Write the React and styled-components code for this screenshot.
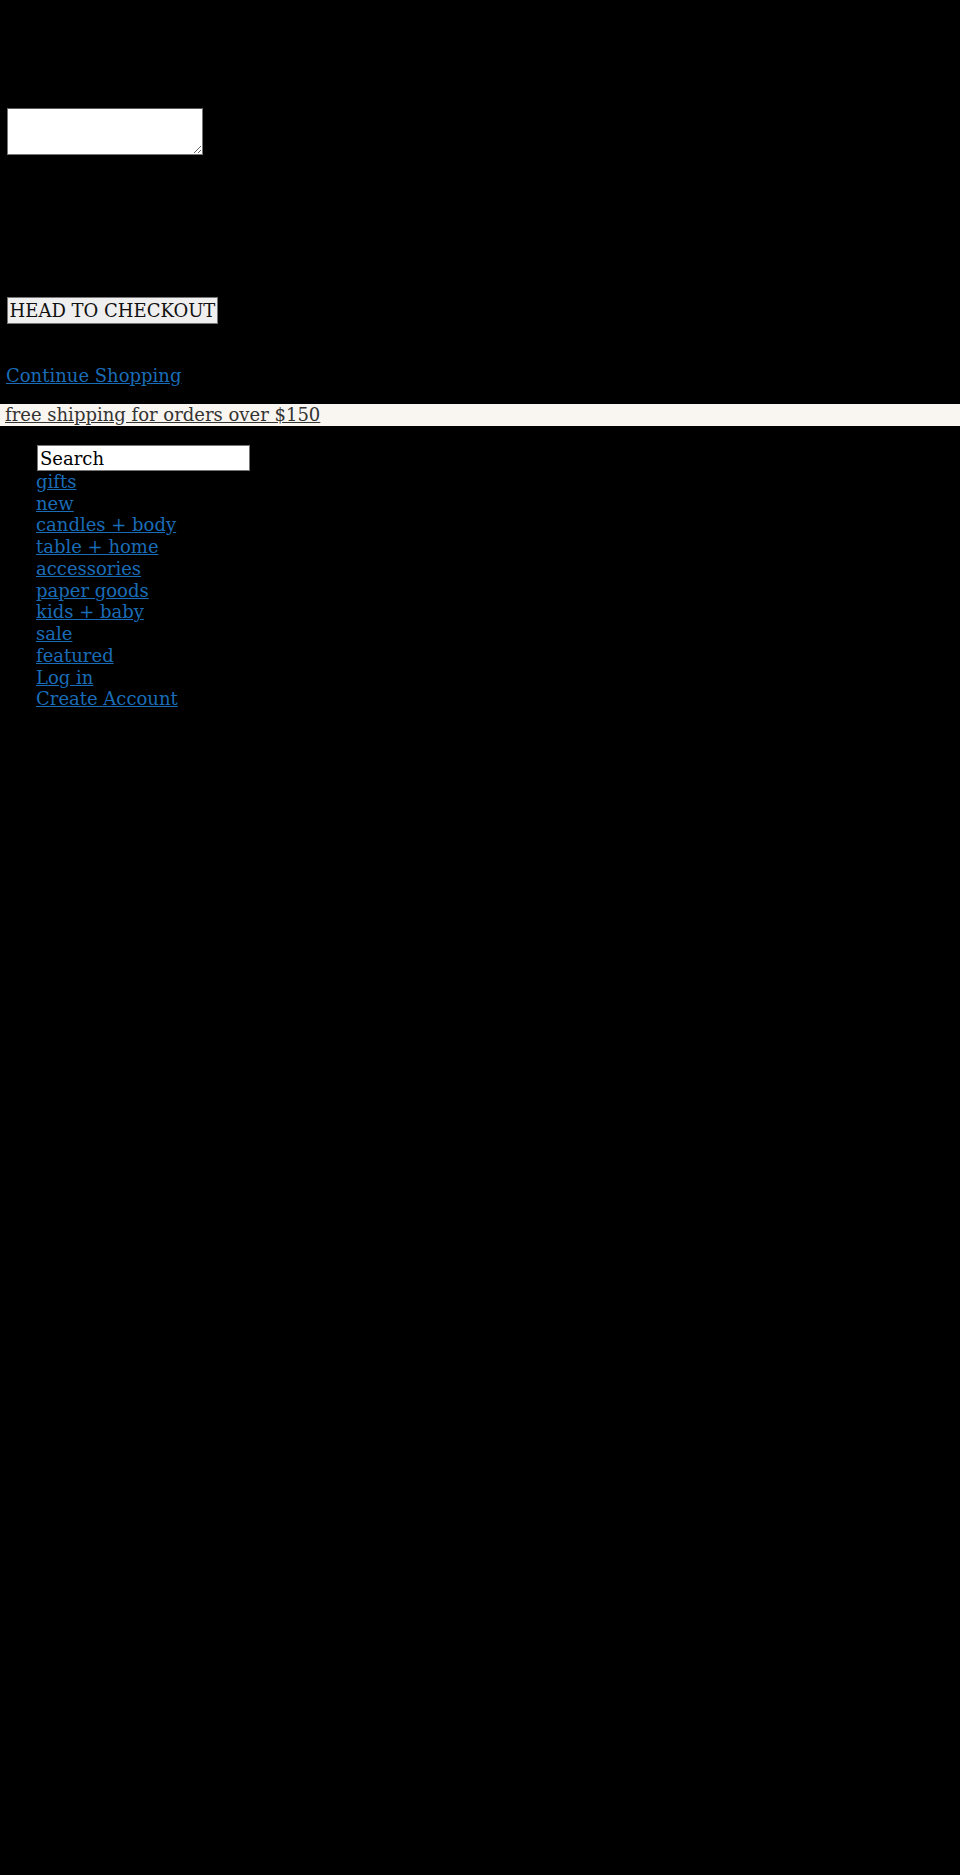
import React from "react";
import styled, { createGlobalStyle } from "styled-components";

const GlobalStyle = createGlobalStyle`
    body {
        margin: 0;
        background: #000;
        font-family: "DejaVu Serif", serif;
        font-size: 18px;
    }
`;

const Page = styled.div`
    min-height: 1875px;
    padding-top: 108px;
    box-sizing: border-box;
`;

const CartForm = styled.form`
    display: flex;
    flex-direction: column;
    align-items: flex-start;
    margin: 0;
`;

const CartNote = styled.textarea`
    width: 196px;
    height: 47px;
    box-sizing: border-box;
    margin-left: 7px;
    border: 1px solid #767676;
    border-top-color: #5a5a5a;
    background: #fff;
`;

const CheckoutButton = styled.button`
    margin: 142px 0 0 7px;
    height: 27px;
    width: 211px;
    padding: 0;
    box-sizing: border-box;
    font-family: "DejaVu Serif", serif;
    font-size: 18px;
    text-align: center;
    color: #111;
    background: #efefef;
    border: 1px solid #767676;
    white-space: nowrap;
`;

const Link = styled.a`
    color: #1a6cb7;
    text-decoration: underline;
    font-size: 18px;
    line-height: 21.75px;
`;

const ContinueLink = styled(Link)`
    display: block;
    margin: 41px 0 0 6px;
`;

const ShippingBar = styled.div`
    margin-top: 17px;
    height: 22px;
    line-height: 22px;
    padding-left: 5px;
    background: #f9f6f1;
`;

const ShippingLink = styled(Link)`
    color: #333;
    line-height: 22px;
`;

const Nav = styled.ul`
    list-style: none;
    margin: 19px 0 0;
    padding-left: 36px;
`;

const NavItem = styled.li`
    line-height: 21.75px;
`;

const SearchInput = styled.input`
    display: block;
    width: 213px;
    height: 26px;
    box-sizing: border-box;
    margin-left: 1px;
    padding: 1px 2px 0;
    font-family: "DejaVu Serif", serif;
    font-size: 18px;
    border: 1px solid #767676;
    background: #fff;
    &::placeholder {
        color: #000;
    }
`;

const navLinks = [
    "gifts",
    "new",
    "candles + body",
    "table + home",
    "accessories",
    "paper goods",
    "kids + baby",
    "sale",
    "featured",
    "Log in",
    "Create Account",
];

function App() {
    return (
        <Page>
            <GlobalStyle />
            <CartForm onSubmit={(e) => e.preventDefault()}>
                <CartNote />
                <CheckoutButton type="submit">HEAD TO CHECKOUT</CheckoutButton>
            </CartForm>
            <ContinueLink href="#">Continue Shopping</ContinueLink>
            <ShippingBar>
                <ShippingLink href="#">free shipping for orders over $150</ShippingLink>
            </ShippingBar>
            <Nav>
                <NavItem>
                    <SearchInput type="search" placeholder="Search" />
                </NavItem>
                {navLinks.map((label) => (
                    <NavItem key={label}>
                        <Link href="#">{label}</Link>
                    </NavItem>
                ))}
            </Nav>
        </Page>
    );
}

export default App;
